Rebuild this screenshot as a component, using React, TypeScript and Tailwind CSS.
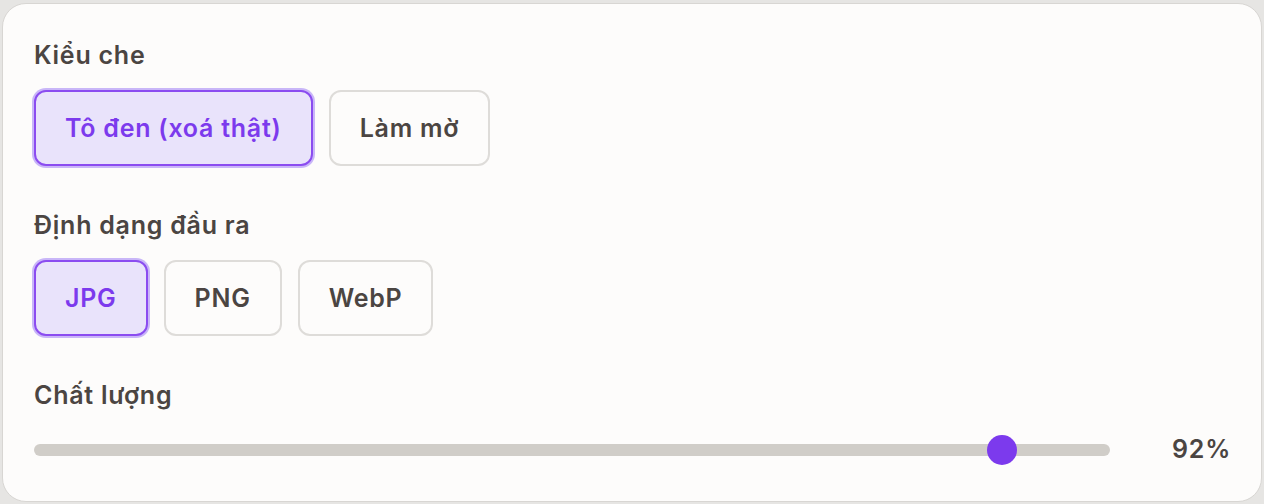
const styles = ["Tô đen (xoá thật)", "Làm mờ"];
const formats = ["JPG", "PNG", "WebP"];

const Option = ({ label, active }: { label: string; active: boolean }) => (
  <button
    className={
      active
        ? "h-[76px] px-[29px] rounded-xl border-2 border-[#8b4cf0] bg-[#e9e3fb] text-[#7c3aed] ring-2 ring-[#c9b6f8] text-[25px] leading-8 tracking-[0.03em] font-semibold"
        : "h-[76px] px-[29px] rounded-xl border-2 border-[#dedcd9] bg-[#fdfcfb] text-[#4b4542] text-[25px] leading-8 tracking-[0.03em] font-semibold"
    }
  >
    {label}
  </button>
);

export default function App() {
  const quality = 92;
  const pct = (quality - 10) / 90;

  return (
    <div
      className="min-h-[504px] bg-[#e6e5e3] pt-[3px] px-[2px] pb-[2px]"
      style={{ fontFamily: "Inter, 'Noto Sans', sans-serif" }}
    >
      <div className="h-[499px] rounded-[24px] border border-[#d8d6d3] bg-[#fdfcfb] pl-[31px] pr-[30px] pt-[35px]">
        <div className="text-[25px] leading-8 tracking-[0.03em] font-semibold text-[#4b4542]">Kiểu che</div>
        <div className="mt-[19px] flex gap-4">
          {styles.map((s, i) => (
            <Option key={s} label={s} active={i === 0} />
          ))}
        </div>

        <div className="mt-[43px] text-[25px] leading-8 tracking-[0.03em] font-semibold text-[#4b4542]">Định dạng đầu ra</div>
        <div className="mt-[19px] flex gap-4">
          {formats.map((f, i) => (
            <Option key={f} label={f} active={i === 0} />
          ))}
        </div>

        <div className="mt-[43px] text-[25px] leading-8 tracking-[0.03em] font-semibold text-[#4b4542]">Chất lượng</div>
        <div className="mt-[20px] flex items-center">
          <div className="relative h-[30px] flex-1 flex items-center">
            <div className="h-[12px] w-full rounded-full bg-[#d0cdc8]" />
            <div
              className="absolute top-0 h-[30px] w-[30px] rounded-full bg-[#7c3aed]"
              style={{ left: `calc((100% - 30px) * ${pct})` }}
            />
          </div>
          <div className="w-[121px] text-right text-[25px] tracking-[0.03em] font-semibold text-[#4b4542]">{quality}%</div>
        </div>
      </div>
    </div>
  );
}
